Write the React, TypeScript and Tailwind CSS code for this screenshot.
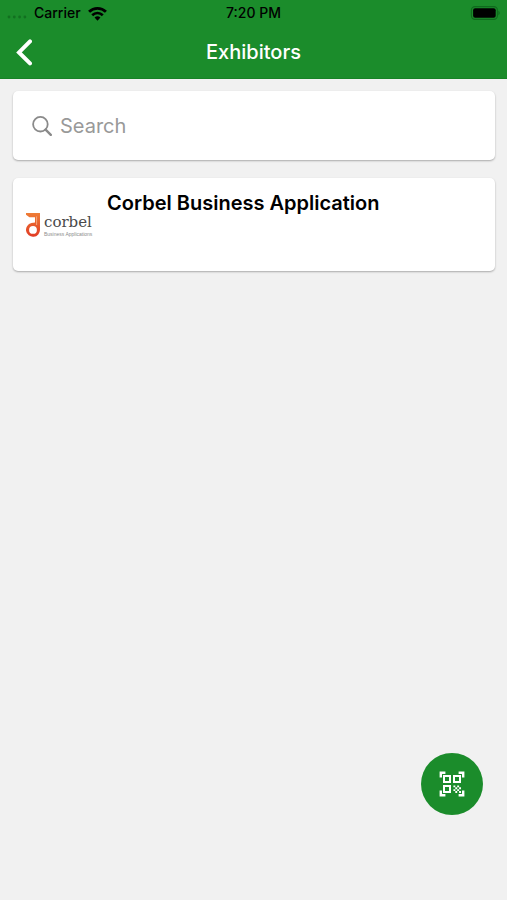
import { useState } from "react";

const EXHIBITORS = [{ id: 1, name: "Corbel Business Application" }];

export default function App() {
  const [query, setQuery] = useState("");

  const visible = EXHIBITORS.filter((item) =>
    item.name.toLowerCase().includes(query.toLowerCase())
  );

  return (
    <div className="min-h-screen bg-[#f1f1f1] font-['Inter','Liberation_Sans',sans-serif]">
      <header className="bg-[#1b8c2b] border-b border-[#178226]">
        <StatusBar />
        <div className="grid grid-cols-[1fr_auto_1fr] items-center h-13 px-4">
          <button type="button" aria-label="Back" className="w-4 h-7 text-white">
            <svg viewBox="0 0 16 28" className="w-4 h-7" fill="none">
              <path
                d="M14 3.4 3 14.4 14 25.4"
                stroke="currentColor"
                strokeWidth="4"
                strokeLinecap="round"
                strokeLinejoin="miter"
              />
            </svg>
          </button>
          <h1 className="text-xl font-medium text-white">Exhibitors</h1>
        </div>
      </header>

      <main className="flex flex-col gap-[18px] pl-[13px] pr-3 pt-3">
        {/* Search */}
        <label className="flex items-center gap-2 h-[69px] px-[19px] bg-white rounded-[5px] shadow-[0_1px_2px_rgba(0,0,0,0.3)]">
          <SearchIcon />
          <input
            type="text"
            aria-label="Search"
            placeholder="Search"
            value={query}
            onChange={(e) => setQuery(e.target.value)}
            className="flex-1 min-w-0 bg-transparent text-xl text-black placeholder:text-[#999999] outline-none"
          />
        </label>

        {/* Exhibitor list */}
        <ul className="flex flex-col gap-3">
          {visible.map((item) => (
            <li key={item.id}>
              <a
                href="#"
                className="flex items-start gap-3 min-h-[93px] px-3 py-3 bg-white rounded-[5px] shadow-[0_1px_2px_rgba(0,0,0,0.3)]"
              >
                <span className="flex items-center w-[70px] h-[69px] shrink-0">
                  <CorbelLogo />
                </span>
                <span className="text-xl leading-[26px] font-semibold text-black">
                  {item.name}
                </span>
              </a>
            </li>
          ))}
        </ul>
      </main>

      <button
        type="button"
        aria-label="Scan QR code"
        className="fixed right-6 bottom-[85px] flex items-center justify-center w-[62px] h-[62px] rounded-full bg-[#1b8c2b] text-white"
      >
        <QrScanIcon />
      </button>
    </div>
  );
}

function StatusBar() {
  return (
    <div className="grid grid-cols-[1fr_auto_1fr] items-center h-[26px] px-[7px] text-sm font-medium text-black">
      <div className="flex items-center gap-[7px]">
        <svg viewBox="0 0 20 4" className="w-5 h-1 mt-2" fill="#127020">
          <circle cx="2" cy="2" r="1.4" />
          <circle cx="7.3" cy="2" r="1.4" />
          <circle cx="12.6" cy="2" r="1.4" />
          <circle cx="17.9" cy="2" r="1.4" />
        </svg>
        <span>Carrier</span>
        <svg viewBox="0 0 18 14" className="w-[19px] h-[15px]" fill="none" stroke="black">
          <path d="M1 5.4a11.4 11.4 0 0 1 16 0" strokeWidth="2.7" />
          <path d="M4 8.6a7.1 7.1 0 0 1 10 0" strokeWidth="2.5" />
          <path d="M9 13.8 6.2 10.9a4 4 0 0 1 5.6 0z" fill="black" stroke="none" />
        </svg>
      </div>
      <span>7:20 PM</span>
      <svg viewBox="0 0 30 14" className="w-[30px] h-[14px] justify-self-end" fill="none">
        <rect x="1.4" y="0.6" width="26" height="12.8" rx="3.6" stroke="#0f6a1d" strokeWidth="1.1" />
        <rect x="3.1" y="2.3" width="22.6" height="9.4" rx="2" fill="black" />
        <path d="M28.4 4.8c1.7.7 1.7 3.7 0 4.4z" fill="#0f6a1d" />
      </svg>
    </div>
  );
}

function SearchIcon() {
  return (
    <svg viewBox="0 0 20 20" className="w-5 h-5 shrink-0" fill="none" stroke="#8a8a8a">
      <circle cx="8.4" cy="8.2" r="7.3" strokeWidth="1.8" />
      <path d="m13.6 13.6 5.2 5.2" strokeWidth="2.4" strokeLinecap="round" />
    </svg>
  );
}

function CorbelLogo() {
  return (
    <span className="flex items-center gap-1 pl-px">
      <svg viewBox="0 0 14 24" className="w-[14px] h-6 shrink-0">
        <defs>
          <linearGradient id="corbel" x1="0" y1="0" x2="0" y2="24" gradientUnits="userSpaceOnUse">
            <stop offset="0" stopColor="#ee7d36" />
            <stop offset="1" stopColor="#e13a24" />
          </linearGradient>
        </defs>
        <path
          d="M0 0h14v16.6a7 7 0 1 1-8.6-6.6L9 9.4V4.2H3.4L0 1.8zM7 13a3.9 3.9 0 1 0 0 7.8A3.9 3.9 0 0 0 7 13z"
          fill="url(#corbel)"
          fillRule="evenodd"
        />
        <path d="M10.6 3.4v8.6" stroke="#f8c3a0" strokeWidth="0.7" />
      </svg>
      <span className="flex flex-col whitespace-nowrap">
        <span className="font-['DejaVu_Serif',serif] text-[15px] leading-[18px] text-[#4a4a4a]">
          corbel
        </span>
        <span className="font-['Liberation_Sans',sans-serif] text-[5px] leading-[6px] text-[#8c8c8c]">
          Business Applications
        </span>
      </span>
    </span>
  );
}

function QrScanIcon() {
  return (
    <svg viewBox="0 0 26 26" className="w-[26px] h-[26px]" fill="none" stroke="currentColor">
      {/* Corner brackets */}
      <path
        d="M1.8 6.4V1.8H6.4M19.6 1.8h4.6V6.4M24.2 19.6v4.6H19.6M6.4 24.2H1.8V19.6"
        strokeWidth="2.4"
      />
      {/* Finder squares */}
      <path d="M5 5h6v6H5zM15 5h6v6h-6zM5 15h6v6H5z" strokeWidth="2" />
      {/* Data modules */}
      <path
        d="M14.4 14.4h1.9v1.9h-1.9zM18.2 14.4h1.9v1.9h-1.9zM16.3 16.3h1.9v1.9h-1.9zM20.1 16.3H22v1.9h-1.9zM14.4 18.2h1.9v1.9h-1.9zM18.2 18.2h1.9v1.9h-1.9zM16.3 20.1h1.9V22h-1.9zM20.1 20.1H22V22h-1.9z"
        fill="currentColor"
        stroke="none"
      />
    </svg>
  );
}
